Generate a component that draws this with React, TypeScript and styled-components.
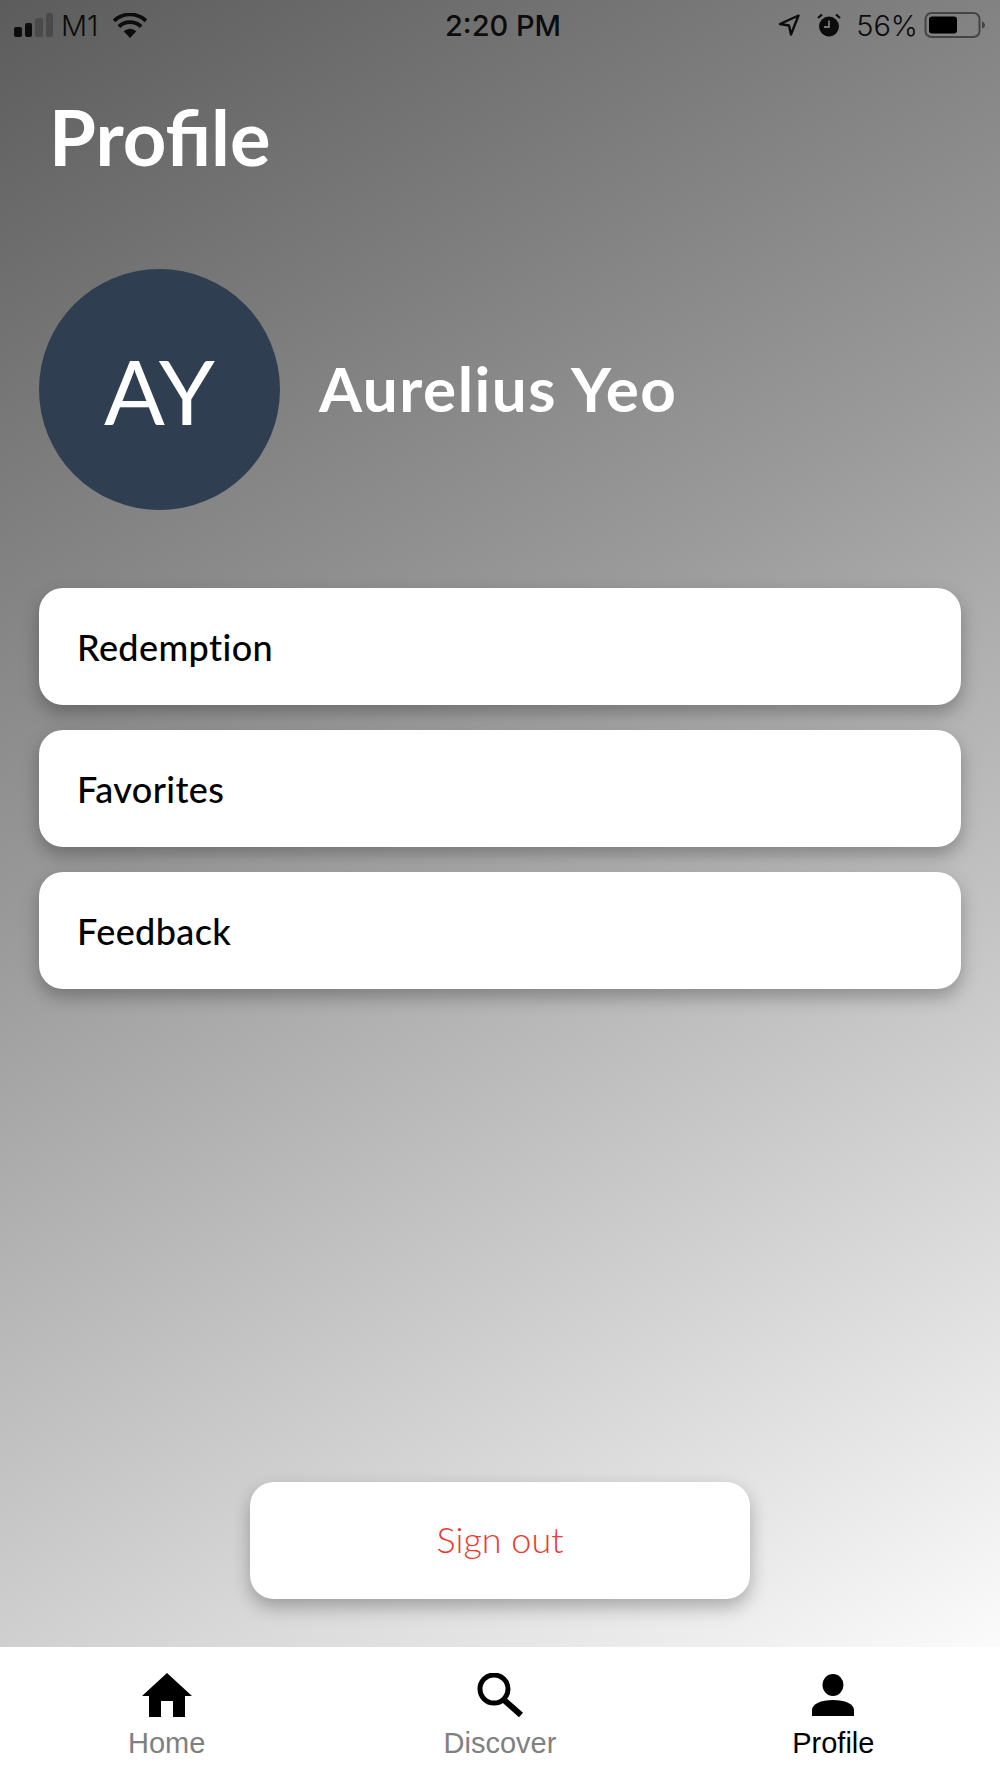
import styled, { createGlobalStyle } from 'styled-components';

const GlobalStyle = createGlobalStyle`
  html, body {
    margin: 0;
    padding: 0;
    background: #fff;
  }
  * {
    box-sizing: border-box;
  }
`;

const Screen = styled.div`
  width: 1000px;
  height: 1778px;
  display: flex;
  flex-direction: column;
  font-family: Lato, 'Open Sans', sans-serif;
  overflow: hidden;
`;

const Content = styled.main`
  height: 1647px;
  display: flex;
  flex-direction: column;
  background: linear-gradient(150deg, #5c5c5c 0%, #9a9a9a 42%, #fbfbfb 100%);
`;

const StatusBar = styled.div`
  height: 50px;
  padding: 0 14px;
  display: grid;
  grid-template-columns: 1fr auto 1fr;
  align-items: center;
  color: #0c0c0c;
  font-family: Inter, Roboto, sans-serif;
`;

const StatusSide = styled.div<{ $end?: boolean }>`
  display: flex;
  align-items: center;
  gap: 8px;
  justify-content: ${({ $end }) => ($end ? 'flex-end' : 'flex-start')};
`;

const Carrier = styled.span`
  font-size: 29px;
  font-weight: 300;
  line-height: 1;
`;

const Clock = styled.span`
  margin-left: 6px;
  font-size: 29px;
  font-weight: 500;
  line-height: 1;
`;

const Signal = styled.div`
  display: flex;
  align-items: flex-end;
  gap: 3px;
  height: 24px;
`;

const SignalBar = styled.span<{ $height: number; $on: boolean }>`
  width: 7.5px;
  height: ${({ $height }) => $height}px;
  border-radius: 2px;
  background: ${({ $on }) => ($on ? '#0c0c0c' : '#4a4a4a')};
`;

const WifiIcon = styled.svg`
  margin-left: 5px;
`;

const StatusIcon = styled.svg<{ $space: number }>`
  margin-right: ${({ $space }) => $space}px;
`;

const Battery = styled.svg`
  margin-left: -2px;
`;

const Title = styled.h1`
  margin: 42px 0 0 49px;
  font-size: 76px;
  line-height: 90px;
  font-weight: 700;
  color: #fff;
`;

const ProfileRow = styled.section`
  margin: 87px 0 0 39px;
  display: flex;
  align-items: center;
  gap: 39px;
`;

const Avatar = styled.div`
  width: 241px;
  height: 241px;
  border-radius: 50%;
  background: #2f3e50;
  color: #fff;
  display: flex;
  align-items: center;
  justify-content: center;
  font-size: 90px;
  font-weight: 400;
`;

const Name = styled.div`
  margin-bottom: 4px;
  font-size: 62px;
  font-weight: 700;
  letter-spacing: 1.5px;
  color: #fff;
`;

const Menu = styled.nav`
  margin: 78px 39px 0;
  display: flex;
  flex-direction: column;
  gap: 25px;
`;

const MenuCard = styled.div`
  height: 117px;
  padding: 0 38px;
  display: flex;
  align-items: center;
  background: #fff;
  border-radius: 24px;
  box-shadow: 0 8px 18px rgba(0, 0, 0, 0.28);
  color: #000;
  font-size: 36px;
  font-weight: 500;
  letter-spacing: 0.4px;
`;

const SignOut = styled.button`
  width: 500px;
  height: 117px;
  margin: auto auto 48px;
  padding: 0 0 4px;
  border: 0;
  border-radius: 24px;
  background: #fff;
  box-shadow: 0 8px 18px rgba(0, 0, 0, 0.28);
  color: #ee3a2c;
  font-family: inherit;
  font-size: 36px;
  font-weight: 300;
`;

const TabBar = styled.nav`
  flex: 1;
  display: grid;
  grid-template-columns: repeat(3, 1fr);
  background: #fff;
`;

const Tab = styled.div<{ $active?: boolean }>`
  display: flex;
  flex-direction: column;
  align-items: center;
  padding-top: 26px;
  color: ${({ $active }) => ($active ? '#000' : '#808080')};
  font-family: 'Liberation Sans', Arial, sans-serif;
  font-size: 29px;
`;

const IconSlot = styled.div`
  height: 44px;
  display: flex;
  align-items: center;
  justify-content: center;
  margin-bottom: 8px;
`;

const TabLabel = styled.span`
  line-height: 36px;
`;

const App = () => (
  <Screen>
    <GlobalStyle />
    <Content>
      <StatusBar>
        <StatusSide>
          <Signal>
            <SignalBar $height={10} $on />
            <SignalBar $height={14} $on />
            <SignalBar $height={19} $on={false} />
            <SignalBar $height={24} $on={false} />
          </Signal>
          <Carrier>M1</Carrier>
          <WifiIcon width="36" height="25" viewBox="0 0 34 24" preserveAspectRatio="none">
            <path d="M17 24 11 17.5a8.5 8.5 0 0 1 12 0Z" fill="#0c0c0c" />
            <path d="M6.5 13a15 15 0 0 1 21 0" fill="none" stroke="#0c0c0c" strokeWidth="3.6" />
            <path d="M2 7.5a21.5 21.5 0 0 1 30 0" fill="none" stroke="#0c0c0c" strokeWidth="3.6" />
          </WifiIcon>
        </StatusSide>
        <Clock>2:20 PM</Clock>
        <StatusSide $end>
          <StatusIcon $space={9} width="22" height="22" viewBox="0 0 22 22">
            <path d="M20.5 1.5 2 10l9 1.5 2 9Z" fill="none" stroke="#0c0c0c" strokeWidth="2.4" strokeLinejoin="round" />
          </StatusIcon>
          <StatusIcon $space={7} width="24" height="24" viewBox="0 0 24 24">
            <circle cx="12" cy="13.5" r="10" fill="#0c0c0c" />
            <path d="M12 7.5v6.5H7" fill="none" stroke="#777" strokeWidth="1.8" />
            <path d="M1 5l4-3.5M23 5l-4-3.5" stroke="#0c0c0c" strokeWidth="2.2" />
          </StatusIcon>
          <Carrier>56%</Carrier>
          <Battery width="62" height="28" viewBox="0 0 62 28">
            <rect x="1.5" y="2" width="54" height="24" rx="6" fill="none" stroke="#444" strokeWidth="2" />
            <rect x="5" y="5.5" width="28" height="17" rx="3" fill="#000" />
            <path d="M58 10.5c2 .5 3 2 3 3.5s-1 3-3 3.5Z" fill="#444" />
          </Battery>
        </StatusSide>
      </StatusBar>
      <Title>Profile</Title>
      <ProfileRow>
        <Avatar>AY</Avatar>
        <Name>Aurelius Yeo</Name>
      </ProfileRow>
      <Menu>
        <MenuCard>Redemption</MenuCard>
        <MenuCard>Favorites</MenuCard>
        <MenuCard>Feedback</MenuCard>
      </Menu>
      <SignOut>Sign out</SignOut>
    </Content>
    <TabBar>
      <Tab>
        <IconSlot>
          <svg width="50" height="44" viewBox="0 0 50 44">
            <path d="M25 0 50 23H43V44H31V28H19V44H7V23H0Z" fill="#000" />
          </svg>
        </IconSlot>
        <TabLabel>Home</TabLabel>
      </Tab>
      <Tab>
        <IconSlot>
          <svg width="46" height="44" viewBox="0 0 46 44">
            <circle cx="17" cy="16" r="14" fill="none" stroke="#000" strokeWidth="5" />
            <path d="M27 27 44 42" stroke="#000" strokeWidth="6" />
          </svg>
        </IconSlot>
        <TabLabel>Discover</TabLabel>
      </Tab>
      <Tab $active>
        <IconSlot>
          <svg width="42" height="42" viewBox="0 0 42 42">
            <ellipse cx="21" cy="11" rx="10.5" ry="11" fill="#000" />
            <path d="M0 42V36C0 30 9 26 21 26S42 30 42 36V42Z" fill="#000" />
          </svg>
        </IconSlot>
        <TabLabel>Profile</TabLabel>
      </Tab>
    </TabBar>
  </Screen>
);

export default App;
